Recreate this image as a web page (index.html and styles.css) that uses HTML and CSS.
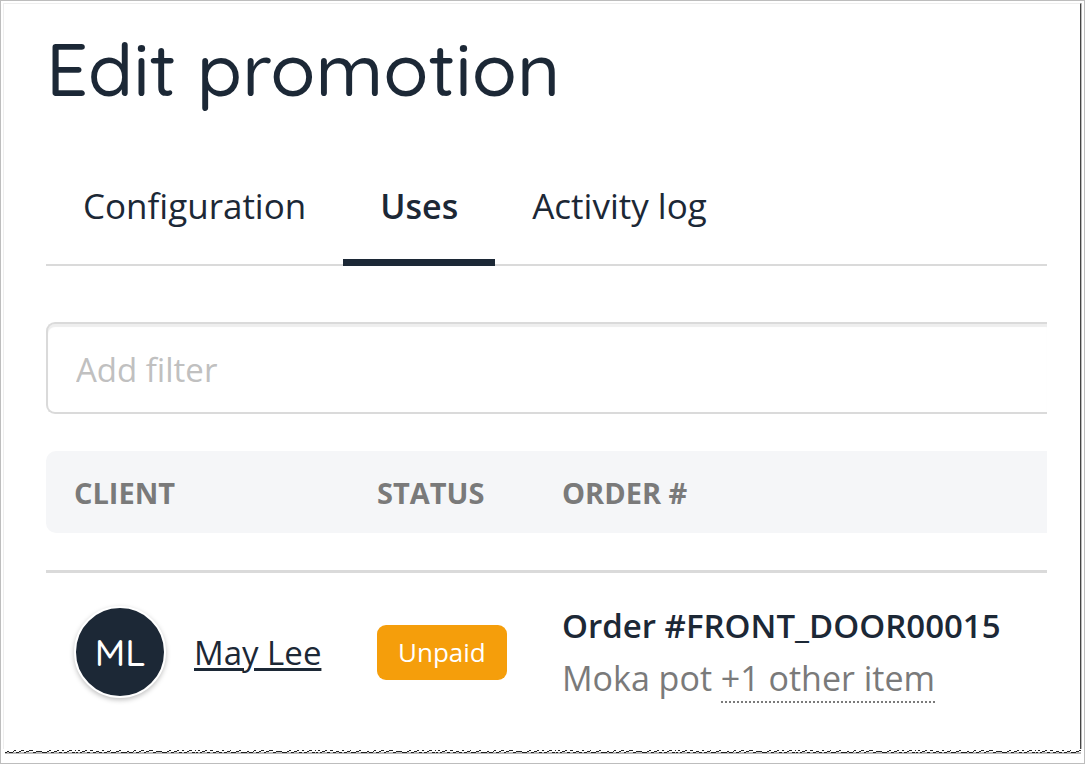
FILE: index.html
```
<!DOCTYPE html>
<html lang="en">
<head>
    <meta charset="UTF-8">
    <meta name="viewport" content="width=device-width, initial-scale=1.0">
    <title>Edit promotion</title>
    <link rel="stylesheet" href="styles.css">
</head>
<body>
    <div class="page">
        <main class="sheet">
            <h1>Edit promotion</h1>

            <nav class="tabs">
                <a href="#configuration" class="tab">Configuration</a>
                <a href="#uses" class="tab active">Uses</a>
                <a href="#activity" class="tab">Activity log</a>
            </nav>

            <input type="text" class="filter" placeholder="Add filter" aria-label="Add filter">

            <table class="uses">
                <thead>
                    <tr>
                        <th class="col-client">Client</th>
                        <th class="col-status">Status</th>
                        <th>Order #</th>
                    </tr>
                </thead>
                <tbody>
                    <tr>
                        <td>
                            <div class="client">
                                <span class="avatar">ML</span>
                                <a href="#client" class="client-name">May Lee</a>
                            </div>
                        </td>
                        <td><div class="status">Unpaid</div></td>
                        <td>
                            <div class="order-name">Order #FRONT_DOOR00015</div>
                            <div class="order-items">Moka pot <span class="more">+1 other item</span></div>
                        </td>
                    </tr>
                </tbody>
            </table>
        </main>

        <!-- Torn bottom edge -->
        <svg class="torn" width="100%" height="6" aria-hidden="true">
            <defs>
                <pattern id="tear" width="120" height="6" patternUnits="userSpaceOnUse">
                    <path d="M0 4H120" fill="none" stroke="#bbb" stroke-width="2"/>
                    <path d="M0 3H2M2 2H4M4 3H8M8 2H9M9 1H11M11 3H14M14 2H16M16 1H19M19 3H21M21 2H24M24 1H28M28 3H31M31 2H37M37 3H42M42 2H44M44 1H46M46 3H49M49 2H52M52 1H54M54 3H57M57 1H59M59 3H62M62 2H64M64 1H67M67 3H70M70 1H71M71 3H73M73 1H75M75 3H77M77 2H80M80 1H82M82 3H85M85 1H88M88 3H91M91 2H94M94 3H97M97 1H99M99 3H102M102 2H105M105 1H106M106 3H111M111 2H114M114 1H116M116 3H120" fill="none" stroke="#222" stroke-width="1" transform="translate(0 .5)"/>
                </pattern>
            </defs>
            <rect width="100%" height="6" fill="url(#tear)"/>
        </svg>
    </div>
</body>
</html>
```
FILE: styles.css
```
* {
    box-sizing: border-box;
}
body {
    margin: 0;
    font-family: "Segoe UI", "Open Sans", "Noto Sans", sans-serif;
    font-size: 33px;
    color: #1c2836;
    background-color: #fff;
}
.page {
    display: flex;
    flex-direction: column;
    min-height: 100vh;
    padding: 2px 3px 8px 2px;
    border: 1px solid #bdbdbd;
}
.sheet {
    flex: 1;
    padding: 25px 33px 0 42px;
    border-top: 1px solid #eee;
    border-left: 1px solid #eee;
    border-right: 1px solid #444;
    box-shadow: 1px 0 0 #bbb;
}
.torn {
    display: block;
    padding-left: 2px;
}
h1 {
    margin: 0 0 38px;
    font-family: Quicksand, Lato, sans-serif;
    font-size: 74px;
    font-weight: 500;
    line-height: 80px;
}
.tabs {
    display: flex;
    border-bottom: 2px solid #dadada;
}
.tab {
    padding: 29px 37px 23px;
    margin-bottom: -2px;
    border-bottom: 7px solid transparent;
    color: #1c2836;
    font-size: 35px;
    line-height: 60px;
    text-decoration: none;
}
.tab.active {
    border-bottom-color: #1c2836;
    font-size: 34px;
    font-weight: 600;
}
.filter {
    display: block;
    width: 100%;
    height: 92px;
    margin-top: 56px;
    padding: 3px 28px 0;
    border: 2px solid #dadada;
    border-right: none;
    border-radius: 9px 0 0 9px;
    box-shadow: inset 0 3px 1px #eee;
    color: #1c2836;
    font: inherit;
}
.filter::placeholder {
    color: #c0c0c0;
    opacity: 1;
}
.uses {
    width: 100%;
    border-spacing: 0 37px;
    text-align: left;
}
.uses th {
    height: 82px;
    padding: 0;
    background-color: #f5f6f8;
    color: #7a7a7a;
    font-size: 29px;
    font-weight: 700;
    text-transform: uppercase;
}
.uses th:first-child {
    padding-left: 28px;
    border-radius: 10px 0 0 10px;
}
.col-client {
    width: 331px;
}
.col-status {
    width: 185px;
}
.uses td {
    padding: 27px 0 0;
    border-top: 3px solid #dadada;
}
.uses td:first-child {
    padding-left: 28px;
}
.client {
    display: flex;
    align-items: center;
    gap: 28px;
}
.avatar {
    display: flex;
    align-items: center;
    justify-content: center;
    width: 92px;
    height: 92px;
    border: 2px solid #fff;
    border-radius: 50%;
    background-color: #1c2836;
    box-shadow: 0 2px 5px rgba(0, 0, 0, 0.25);
    color: #fff;
    font-family: Quicksand, Lato, sans-serif;
    font-size: 37px;
    font-weight: 500;
}
.client-name {
    color: #1c2836;
    text-decoration-thickness: 3px;
    text-underline-offset: 3px;
}
.status {
    width: fit-content;
    padding: 0 21px;
    border-radius: 9px;
    background-color: #f59e0b;
    color: #fff;
    font-size: 26px;
    line-height: 55px;
}
.order-name,
.order-items {
    line-height: 52px;
    white-space: nowrap;
}
.order-name {
    font-weight: 600;
}
.order-items {
    color: #7a7a7a;
    font-size: 34px;
}
.more {
    border-bottom: 2px dotted #7a7a7a;
}
```
